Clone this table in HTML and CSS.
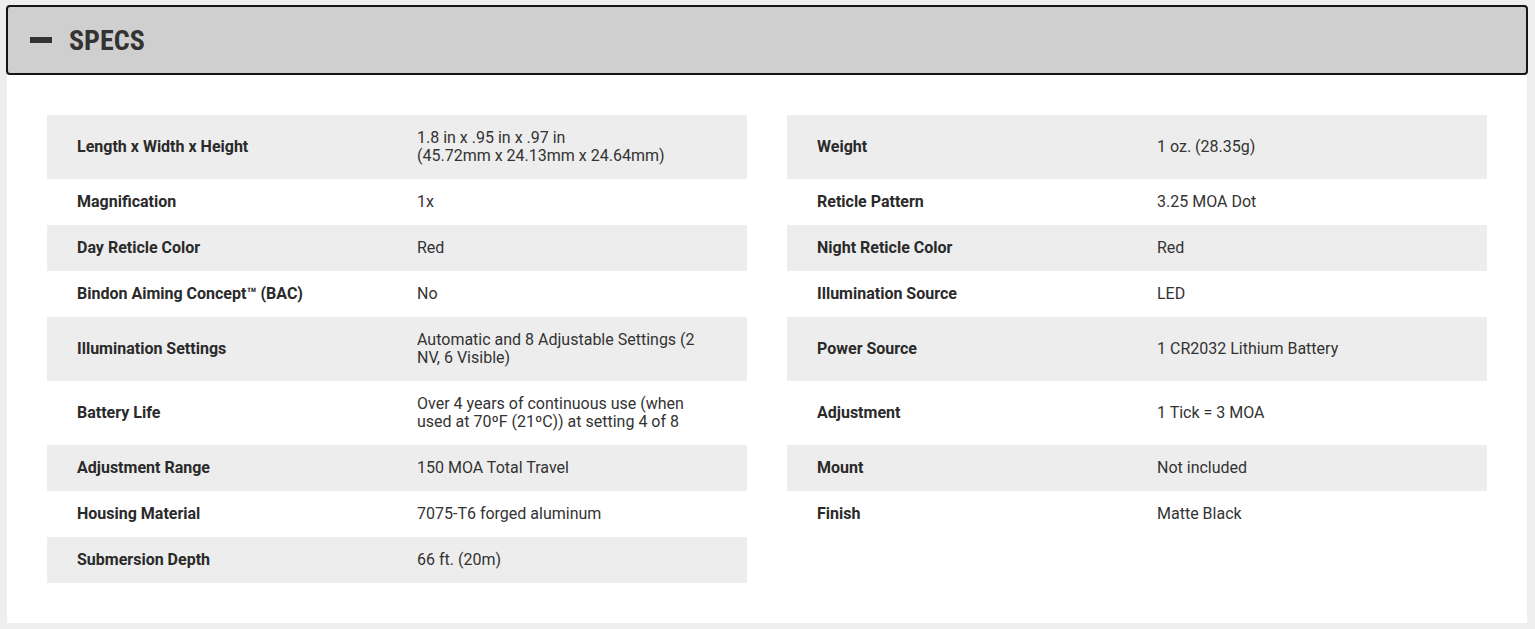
FILE: index.html
```html
<!DOCTYPE html>
<html lang="en">
<head>
<meta charset="utf-8">
<title>Specs</title>
<link rel="stylesheet" href="styles.css">
</head>
<body>
<div class="accordion">
  <div class="acc-header">
    <span class="minus"></span>
    <h2 class="acc-title">SPECS</h2>
  </div>
  <div class="acc-body">
    <div class="spec-table">
      <div class="row tall"><div class="label">Length x Width x Height</div><div class="value">1.8 in x .95 in x .97 in<br>(45.72mm x 24.13mm x 24.64mm)</div></div>
      <div class="row"><div class="label">Magnification</div><div class="value">1x</div></div>
      <div class="row"><div class="label">Day Reticle Color</div><div class="value">Red</div></div>
      <div class="row"><div class="label">Bindon Aiming Concept™ (BAC)</div><div class="value">No</div></div>
      <div class="row tall"><div class="label">Illumination Settings</div><div class="value">Automatic and 8 Adjustable Settings (2 NV, 6 Visible)</div></div>
      <div class="row tall"><div class="label">Battery Life</div><div class="value">Over 4 years of continuous use (when used at 70ºF (21ºC)) at setting 4 of 8</div></div>
      <div class="row"><div class="label">Adjustment Range</div><div class="value">150 MOA Total Travel</div></div>
      <div class="row"><div class="label">Housing Material</div><div class="value">7075-T6 forged aluminum</div></div>
      <div class="row"><div class="label">Submersion Depth</div><div class="value">66 ft. (20m)</div></div>
    </div>
    <div class="spec-table">
      <div class="row tall"><div class="label">Weight</div><div class="value">1 oz. (28.35g)</div></div>
      <div class="row"><div class="label">Reticle Pattern</div><div class="value">3.25 MOA Dot</div></div>
      <div class="row"><div class="label">Night Reticle Color</div><div class="value">Red</div></div>
      <div class="row"><div class="label">Illumination Source</div><div class="value">LED</div></div>
      <div class="row tall"><div class="label">Power Source</div><div class="value">1 CR2032 Lithium Battery</div></div>
      <div class="row tall"><div class="label">Adjustment</div><div class="value">1 Tick = 3 MOA</div></div>
      <div class="row"><div class="label">Mount</div><div class="value">Not included</div></div>
      <div class="row"><div class="label">Finish</div><div class="value">Matte Black</div></div>
    </div>
  </div>
</div>
</body>
</html>
```

FILE: styles.css
```css
html, body {
  margin: 0;
  padding: 0;
  background: #eeeeee;
  font-family: Roboto, "Liberation Sans", sans-serif;
  color: #333333;
}

.accordion {
  margin: 5px 7px 6px 6px;
}

.acc-header {
  height: 66px;
  box-sizing: content-box;
  border: 2px solid #151515;
  border-radius: 4px;
  background: #cfcfcf;
  display: flex;
  align-items: center;
  padding: 0 0 0 22px;
}

.minus {
  display: block;
  width: 22px;
  height: 6px;
  background: #333333;
}

.acc-title {
  margin: 2px 0 0 17px;
  font-family: "Roboto Condensed", Roboto, sans-serif;
  font-weight: 700;
  font-size: 28px;
  line-height: 32px;
  color: #333333;
}

.acc-body {
  margin: 0 1px;
  background: #ffffff;
  padding: 40px;
  display: grid;
  grid-template-columns: 700px 700px;
  column-gap: 40px;
  align-items: start;
}

.spec-table {
  display: flex;
  flex-direction: column;
}

.row {
  display: grid;
  grid-template-columns: 370px 1fr;
  align-items: center;
  min-height: 46px;
  font-size: 16px;
  line-height: 18px;
}

.row.tall {
  min-height: 64px;
}

.spec-table .row:nth-child(odd) {
  background: #ededed;
}

.label {
  padding: 0 30px;
  font-weight: 700;
  color: #2a2a2a;
}

.value {
  padding: 0 30px 0 0;
  font-weight: 400;
  color: #333333;
}
```
